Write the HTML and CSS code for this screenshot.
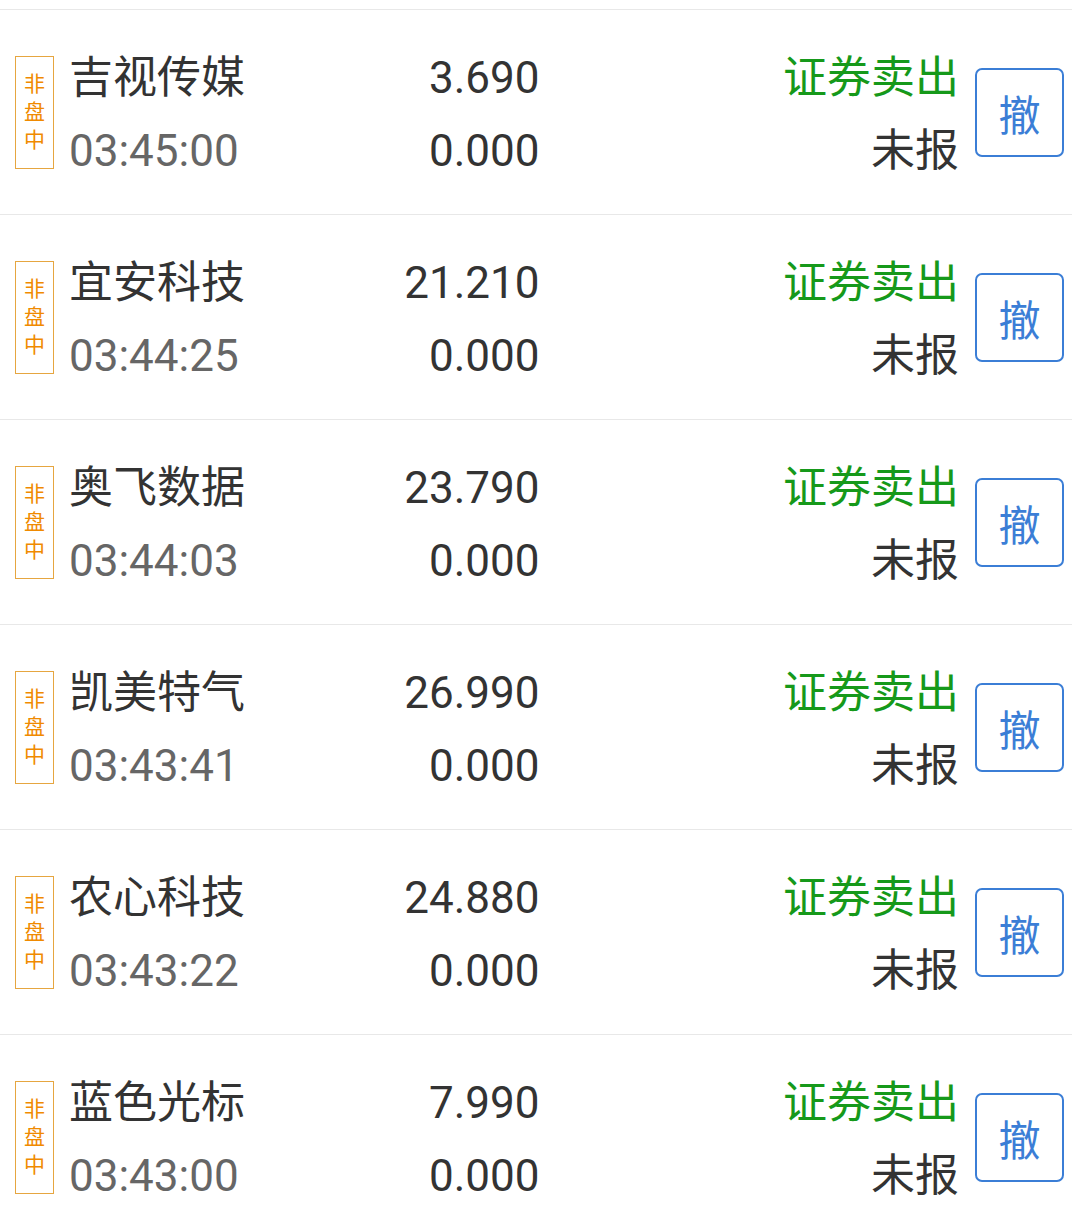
FILE: index.html
```html
<!DOCTYPE html>
<html lang="zh-CN">

<head>
  <meta charset="UTF-8" />
  <meta name="viewport" content="width=device-width, initial-scale=1.0" />
  <title>当日委托</title>
  <link rel="stylesheet" href="styles.css">
</head>

<body>
  <div class="orders">
    <div class="row">
      <div class="badge"><span>非</span><span>盘</span><span>中</span></div>
      <div class="name-col">
        <div class="name">吉视传媒</div>
        <div class="time">03:45:00</div>
      </div>
      <div class="price-col">
        <div>3.690</div>
        <div>0.000</div>
      </div>
      <div class="status-col">
        <div class="sell">证券卖出</div>
        <div>未报</div>
      </div>
      <div class="cancel">撤</div>
    </div>

    <div class="row">
      <div class="badge"><span>非</span><span>盘</span><span>中</span></div>
      <div class="name-col">
        <div class="name">宜安科技</div>
        <div class="time">03:44:25</div>
      </div>
      <div class="price-col">
        <div>21.210</div>
        <div>0.000</div>
      </div>
      <div class="status-col">
        <div class="sell">证券卖出</div>
        <div>未报</div>
      </div>
      <div class="cancel">撤</div>
    </div>

    <div class="row">
      <div class="badge"><span>非</span><span>盘</span><span>中</span></div>
      <div class="name-col">
        <div class="name">奥飞数据</div>
        <div class="time">03:44:03</div>
      </div>
      <div class="price-col">
        <div>23.790</div>
        <div>0.000</div>
      </div>
      <div class="status-col">
        <div class="sell">证券卖出</div>
        <div>未报</div>
      </div>
      <div class="cancel">撤</div>
    </div>

    <div class="row">
      <div class="badge"><span>非</span><span>盘</span><span>中</span></div>
      <div class="name-col">
        <div class="name">凯美特气</div>
        <div class="time">03:43:41</div>
      </div>
      <div class="price-col">
        <div>26.990</div>
        <div>0.000</div>
      </div>
      <div class="status-col">
        <div class="sell">证券卖出</div>
        <div>未报</div>
      </div>
      <div class="cancel">撤</div>
    </div>

    <div class="row">
      <div class="badge"><span>非</span><span>盘</span><span>中</span></div>
      <div class="name-col">
        <div class="name">农心科技</div>
        <div class="time">03:43:22</div>
      </div>
      <div class="price-col">
        <div>24.880</div>
        <div>0.000</div>
      </div>
      <div class="status-col">
        <div class="sell">证券卖出</div>
        <div>未报</div>
      </div>
      <div class="cancel">撤</div>
    </div>

    <div class="row">
      <div class="badge"><span>非</span><span>盘</span><span>中</span></div>
      <div class="name-col">
        <div class="name">蓝色光标</div>
        <div class="time">03:43:00</div>
      </div>
      <div class="price-col">
        <div>7.990</div>
        <div>0.000</div>
      </div>
      <div class="status-col">
        <div class="sell">证券卖出</div>
        <div>未报</div>
      </div>
      <div class="cancel">撤</div>
    </div>
  </div>
</body>

</html>
```

FILE: styles.css
```css
body {
  margin: 0;
  background-color: #fff;
  font-family: Roboto, "Noto Sans CJK SC", sans-serif;
  color: #333;
}

.orders {
  padding-top: 9px;
}

.row {
  display: flex;
  align-items: center;
  height: 204px;
  border-top: 1px solid #e8e8e8;
  padding: 0 8px 0 15px;
}

.badge {
  width: 37px;
  height: 111px;
  border: 1px solid #e6a640;
  color: #f08a00;
  font-size: 21px;
  line-height: 28px;
  display: flex;
  flex-direction: column;
  align-items: center;
  justify-content: center;
  flex-shrink: 0;
}

.name-col,
.price-col,
.status-col {
  font-size: 44px;
  line-height: 73px;
  margin-top: 6px;
}

.name-col {
  margin-left: 15px;
  width: 253px;
}

.time {
  color: #666;
}

.price-col {
  width: 218px;
  text-align: right;
}

.status-col {
  width: 420px;
  text-align: right;
}

.sell {
  color: #16991a;
}

.cancel {
  margin-left: 16px;
  width: 85px;
  height: 85px;
  border: 2px solid #3b7ed6;
  border-radius: 7px;
  color: #3b7ed6;
  font-size: 42px;
  display: flex;
  align-items: center;
  justify-content: center;
  flex-shrink: 0;
}
```
